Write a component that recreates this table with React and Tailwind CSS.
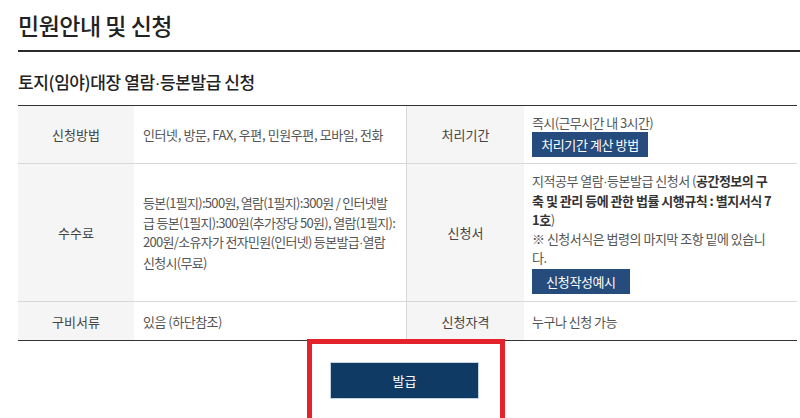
import React from "react";

const FONT = { fontFamily: '"Noto Sans CJK KR", "Noto Sans", sans-serif' };

const Label = ({ children }) => (
  <div className="flex items-center justify-center bg-[#f5f5f5] text-[13px] text-[#444]">
    {children}
  </div>
);

const NavyButton = ({ children, className = "" }) => (
  <button
    className={`h-[25px] whitespace-nowrap bg-[#264b7d] text-[13px] leading-[25px] tracking-[-0.4px] text-white ${className}`}
  >
    {children}
  </button>
);

// narrow middle dot like the original page
const Dot = () => <span style={{ fontFamily: '"Liberation Sans", sans-serif' }}>·</span>;

const App = () => {
  return (
    <div
      className="relative h-[418px] w-[800px] overflow-hidden bg-white text-[#555]"
      style={FONT}
    >
      {/* Page title */}
      <div className="ml-[18px] flex h-[52px] items-center border-b-2 border-[#2b2b2b]">
        <h1 className="text-[23px] font-medium tracking-[-0.5px] text-[#222]">
          민원안내 및 신청
        </h1>
      </div>

      {/* Sub title */}
      <div className="ml-[18px] flex h-[53px] items-center pt-[8px]">
        <h2 className="text-[17px] font-medium tracking-[-0.4px] text-[#222]">
          토지(임야)대장 열람<Dot />등본발급 신청
        </h2>
      </div>

      {/* Info table */}
      <div className="ml-[18px] w-[779px] border-t border-[#333] text-[13px] leading-[19px]">
        <div className="grid h-[58px] grid-cols-[116px_273px_117px_273px] border-b border-[#d8d8d8]">
          <Label>신청방법</Label>
          <div className="flex items-center border-r border-[#d8d8d8] pl-[9px] tracking-[-0.4px]">
            인터넷, 방문, FAX, 우편, 민원우편, 모바일, 전화
          </div>
          <Label>처리기간</Label>
          <div className="flex flex-col items-start justify-center pl-[8px]">
            <span className="tracking-[-0.6px]">즉시(근무시간 내 3시간)</span>
            <NavyButton className="w-[116px]">처리기간 계산 방법</NavyButton>
          </div>
        </div>

        <div className="grid h-[138px] grid-cols-[116px_273px_117px_273px] border-b border-[#d8d8d8]">
          <Label>수수료</Label>
          <div className="flex flex-col justify-center whitespace-nowrap border-r border-[#d8d8d8] pl-[9px] leading-[19.5px] tracking-[-0.7px]">
            <span>등본(1필지):500원, 열람(1필지):300원 / 인터넷발</span>
            <span>급 등본(1필지):300원(추가장당 50원), 열람(1필지):</span>
            <span>200원/소유자가 전자민원(인터넷) 등본발급<Dot />열람</span>
            <span>신청시(무료)</span>
          </div>
          <Label>신청서</Label>
          <div className="flex flex-col items-start justify-center whitespace-nowrap pl-[8px] tracking-[-0.5px]">
            <span>
              지적공부 열람<Dot />등본발급 신청서 (
              <b className="font-bold text-[#333]">공간정보의 구</b>
            </span>
            <span className="font-bold text-[#333]">축 및 관리 등에 관한 법률 시행규칙 : 별지서식 7</span>
            <span>
              <b className="font-bold text-[#333]">1호</b>)
            </span>
            <span>※ 신청서식은 법령의 마지막 조항 밑에 있습니</span>
            <span>다.</span>
            <NavyButton className="mt-[2px] w-[98px]">신청작성예시</NavyButton>
          </div>
        </div>

        <div className="grid h-[39px] grid-cols-[116px_273px_117px_273px] border-b border-[#333]">
          <Label>구비서류</Label>
          <div className="flex items-center border-r border-[#d8d8d8] pl-[9px] tracking-[-0.5px]">
            있음 (하단참조)
          </div>
          <Label>신청자격</Label>
          <div className="flex items-center pl-[8px] tracking-[-0.5px]">누구나 신청 가능</div>
        </div>
      </div>

      {/* Submit */}
      <div className="flex pl-[330px] pt-[21px]">
        <button className="h-[37px] w-[149px] border border-[#c5d3e2] bg-[#0f3a63] text-[13px] text-white">
          발급
        </button>
      </div>

      {/* Red highlight annotation */}
      <div className="absolute left-[307px] top-[339px] h-[90px] w-[198px] border-[5px] border-[#e3222b]" />
    </div>
  );
};

export default App;
